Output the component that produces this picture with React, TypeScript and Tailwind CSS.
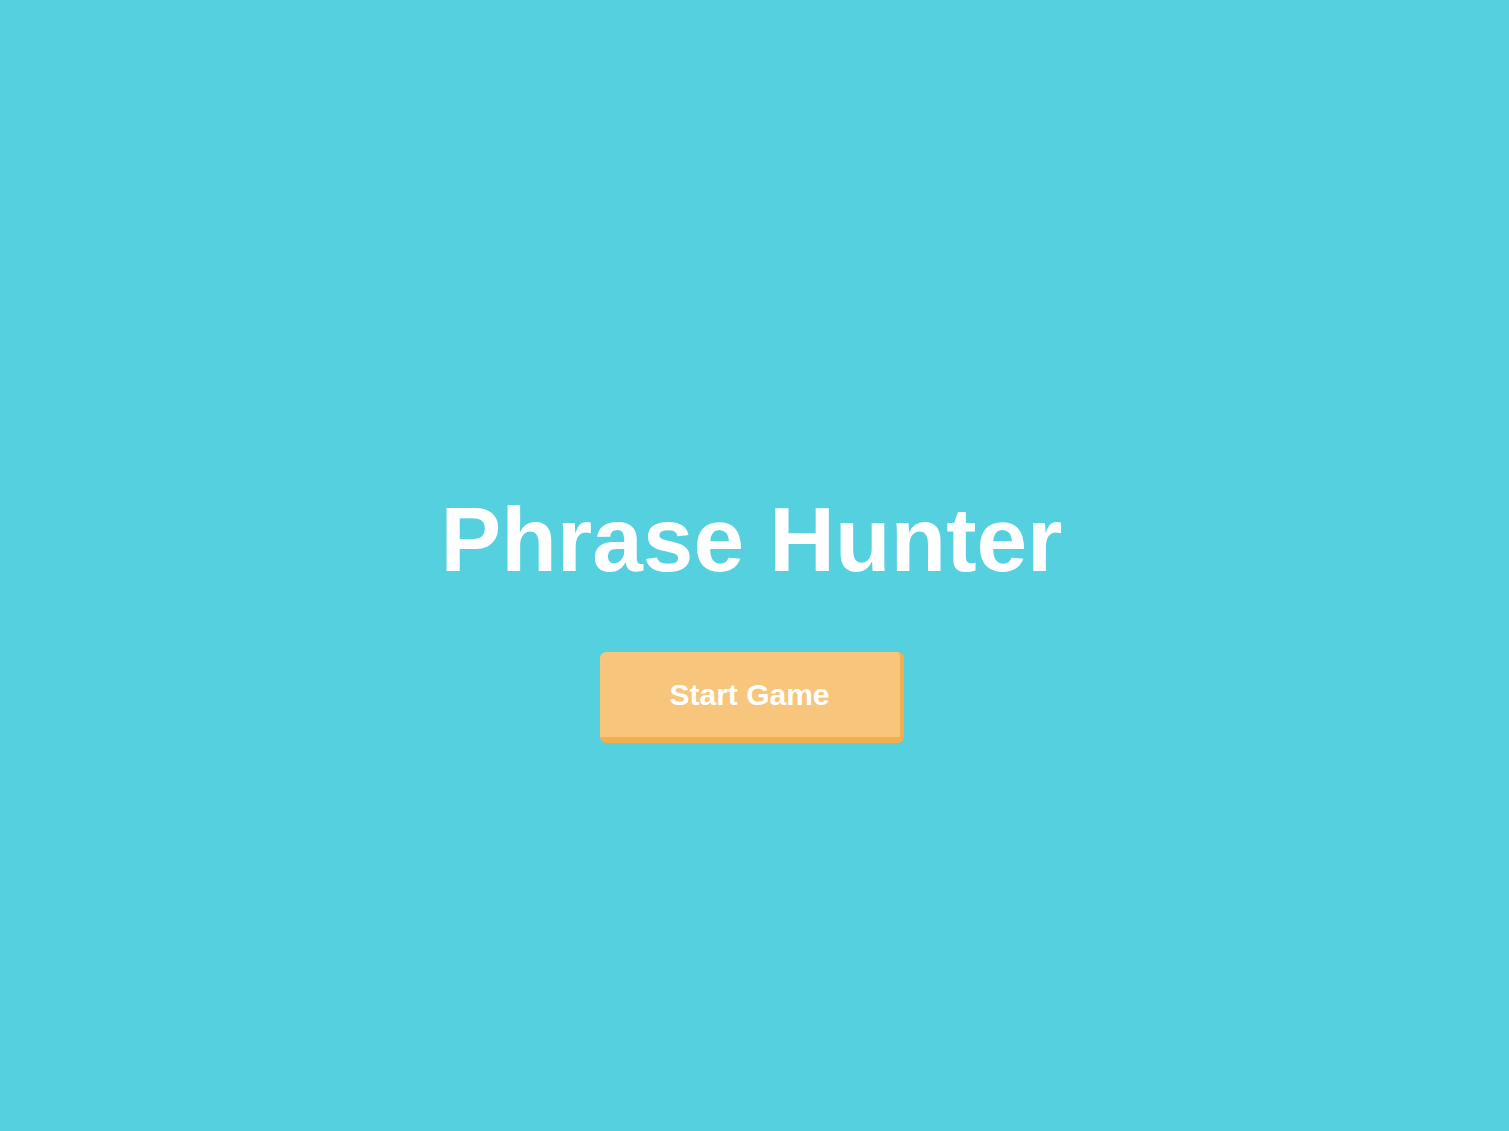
export default function App() {
  return (
    <div
      className="flex min-h-screen flex-col items-center bg-[#55d0df] pt-[494px] pr-[6px]"
      style={{ fontFamily: '"Liberation Sans", Arial, sans-serif' }}
    >
      {/* Title */}
      <h1 className="text-[91px] font-bold leading-none text-white">
        Phrase Hunter
      </h1>

      {/* Start button */}
      <button className="mt-[67px] h-[91px] w-[304px] rounded-[6px] border-r-4 border-b-[6px] border-[#f3ae4e] bg-[#f7c57b] text-[30px] font-bold text-white">
        Start Game
      </button>
    </div>
  );
}
